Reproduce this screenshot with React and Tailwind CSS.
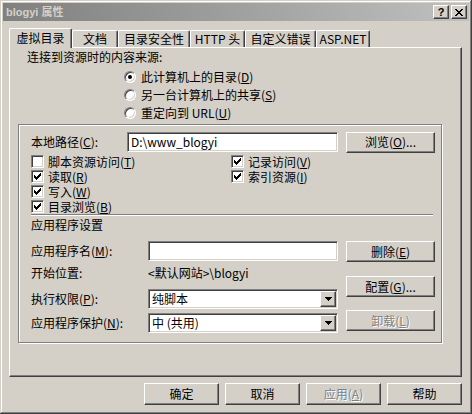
const sunken =
  'border border-t-[#808080] border-l-[#808080] border-r-white border-b-white shadow-[inset_1px_1px_0_#404040,inset_-1px_-1px_0_#d4d0c8]';
const raised =
  'border border-t-white border-l-white border-r-[#404040] border-b-[#404040] shadow-[inset_-1px_-1px_0_#808080]';

const Key = ({ k }) => (
  <>
    (<u>{k}</u>)
  </>
);

const Check = ({ checked }) => (
  <span className={`w-[13px] h-[13px] shrink-0 bg-white flex items-center justify-center ${sunken}`}>
    {checked && (
      <svg width="7" height="7" viewBox="0 0 7 7" shapeRendering="crispEdges">
        <path d="M0 2h1v3H0zM1 3h1v3H1zM2 4h1v3H2zM3 3h1v3H3zM4 2h1v3H4zM5 1h1v3H5zM6 0h1v3H6z" fill="#000" />
      </svg>
    )}
  </span>
);

const Radio = ({ checked, children }) => (
  <div className="h-[18px] flex items-center">
    <span className="w-[12px] h-[12px] rounded-full bg-white flex items-center justify-center border border-t-[#808080] border-l-[#808080] border-r-white border-b-white shadow-[inset_1px_1px_0_#404040,inset_-1px_-1px_0_#d4d0c8]">
      {checked && <span className="w-[4px] h-[4px] rounded-full bg-black" />}
    </span>
    <span className="ml-[5px] leading-[14px]">{children}</span>
  </div>
);

const Button = ({ children, disabled, className }) => (
  <div
    className={`bg-[#d4d0c8] flex items-center justify-center leading-[14px] ${raised} ${className} ${
      disabled ? 'text-[#808080] [text-shadow:1px_1px_0_#fff]' : 'text-black'
    }`}
  >
    {children}
  </div>
);

const Arrow = () => (
  <span className={`w-[16px] h-[16px] mr-px shrink-0 bg-[#d4d0c8] flex items-center justify-center ${raised}`}>
    <svg width="7" height="4" viewBox="0 0 7 4" shapeRendering="crispEdges">
      <path d="M0 0h7v1H0zM1 1h5v1H1zM2 2h3v1H2zM3 3h1v1H3z" fill="#000" />
    </svg>
  </span>
);

const Select = ({ value }) => (
  <div className={`w-[190px] h-[20px] bg-white flex items-center pl-[3px] ${sunken}`}>
    <span className="flex-1 leading-[14px]">{value}</span>
    <Arrow />
  </div>
);

const CheckRow = ({ checked, children }) => (
  <div className="h-[15px] flex items-center">
    <Check checked={checked} />
    <span className="ml-[4px] leading-[14px]">{children}</span>
  </div>
);

const tabs = [
  { label: '文档', w: 'w-[46px]' },
  { label: '目录安全性', w: 'w-[72px]' },
  { label: 'HTTP 头', w: 'w-[55px]' },
  { label: '自定义错误', w: 'w-[71px]' },
  { label: 'ASP.NET', w: 'w-[54px]' },
];

export default function App() {
  return (
    <div className="w-[472px] h-[414px] p-[3px] bg-[#d4d0c8] text-[12px] text-black font-['Noto_Sans_CJK_SC','Liberation_Sans',sans-serif] shadow-[inset_-1px_-1px_0_#404040,inset_1px_1px_0_#d4d0c8,inset_-2px_-2px_0_#808080,inset_2px_2px_0_#ffffff] overflow-hidden select-none">
      {/* title bar */}
      <div className="h-[18px] flex items-center pl-[3px] pr-[2px] bg-gradient-to-r from-[#808080] to-[#c0c0c0]">
        <span className="flex-1 text-[11px] font-bold text-[#d4d0c8] leading-[14px] font-['Liberation_Sans','Noto_Sans_CJK_SC',sans-serif]">
          blogyi 属性
        </span>
        <Button className="w-[16px] h-[14px] text-[11px] font-bold font-['Liberation_Sans',sans-serif]">?</Button>
        <Button className="w-[16px] h-[14px] ml-[2px]">
          <svg width="8" height="7" viewBox="0 0 8 7" shapeRendering="crispEdges">
            <path
              d="M0 0h2v1H0zM6 0h2v1H6zM1 1h2v1H1zM5 1h2v1H5zM2 2h4v1H2zM3 3h2v1H3zM2 4h4v1H2zM1 5h2v1H1zM5 5h2v1H5zM0 6h2v1H0zM6 6h2v1H6z"
              fill="#000"
            />
          </svg>
        </Button>
      </div>

      {/* tabs */}
      <div className="ml-[6px] mt-[7px] h-[19px] flex items-end">
        <div className="relative z-10 w-[63px] h-[20px] -mb-px pt-[2px] flex justify-center bg-[#d4d0c8] border-t border-l border-white border-r border-r-[#404040] rounded-t-[2px] shadow-[inset_-1px_0_0_#808080]">
          <span className="leading-[14px]">虚拟目录</span>
        </div>
        {tabs.map((t) => (
          <div
            key={t.label}
            className={`${t.w} h-[17px] pt-px flex justify-center border-t border-l border-white border-r border-r-[#404040] rounded-t-[2px] shadow-[inset_-1px_0_0_#808080]`}
          >
            <span className="leading-[14px]">{t.label}</span>
          </div>
        ))}
      </div>

      {/* tab panel */}
      <div className="ml-[6px] w-[453px] h-[330px] border border-t-white border-l-white border-r-[#404040] border-b-[#404040] shadow-[inset_-1px_-1px_0_#808080]">
        <div className="ml-[17px] mt-[2px] leading-[14px]">连接到资源时的内容来源:</div>
        <div className="ml-[114px] mt-[4px] flex flex-col">
          <Radio checked>
            此计算机上的目录<Key k="D" />
          </Radio>
          <Radio>
            另一台计算机上的共享<Key k="S" />
          </Radio>
          <Radio>
            重定向到 URL<Key k="U" />
          </Radio>
        </div>

        {/* group box */}
        <div className="ml-[8px] mt-[2px] w-[424px] h-[219px] pl-[12px] pt-[7px] border border-[#808080] shadow-[1px_1px_0_#fff,inset_1px_1px_0_#fff]">
          <div className="h-[20px] flex items-center">
            <span className="w-[96px] leading-[14px]">
              本地路径<Key k="C" />:
            </span>
            <div className={`w-[211px] h-[20px] bg-white flex items-center pl-[3px] ${sunken}`}>
              <span className="leading-[14px]">D:\www_blogyi</span>
            </div>
            <Button className="ml-[8px] w-[89px] h-[21px]">
              浏览<Key k="O" />...
            </Button>
          </div>

          <div className="mt-[2px] flex">
            <div className="w-[200px] flex flex-col">
              <CheckRow>
                脚本资源访问<Key k="T" />
              </CheckRow>
              <CheckRow checked>
                读取<Key k="R" />
              </CheckRow>
              <CheckRow checked>
                写入<Key k="W" />
              </CheckRow>
              <CheckRow checked>
                目录浏览<Key k="B" />
              </CheckRow>
            </div>
            <div className="flex flex-col">
              <CheckRow checked>
                记录访问<Key k="V" />
              </CheckRow>
              <CheckRow checked>
                索引资源<Key k="I" />
              </CheckRow>
            </div>
          </div>

          <div className="w-[402px] h-px bg-[#808080] shadow-[0_1px_0_#fff]" />

          <div className="mt-[3px] leading-[14px]">应用程序设置</div>

          <div className="mt-[9px] flex">
            <div className="w-[307px] flex flex-col">
              <div className="h-[20px] flex items-center">
                <span className="w-[117px] leading-[14px]">
                  应用程序名<Key k="M" />:
                </span>
                <div className={`w-[190px] h-[20px] bg-white ${sunken}`} />
              </div>
              <div className="mt-[5px] h-[14px] flex items-center">
                <span className="w-[117px] leading-[14px]">开始位置:</span>
                <span className="leading-[14px]">&lt;默认网站&gt;\blogyi</span>
              </div>
              <div className="mt-[9px] h-[20px] flex items-center">
                <span className="w-[117px] leading-[14px]">
                  执行权限<Key k="P" />:
                </span>
                <Select value="纯脚本" />
              </div>
              <div className="mt-[4px] h-[20px] flex items-center">
                <span className="w-[117px] leading-[14px]">
                  应用程序保护<Key k="N" />:
                </span>
                <Select value="中 (共用)" />
              </div>
            </div>
            <div className="ml-[8px] flex flex-col">
              <Button className="w-[89px] h-[21px]">
                删除<Key k="E" />
              </Button>
              <Button className="mt-[14px] w-[89px] h-[21px]">
                配置<Key k="G" />...
              </Button>
              <Button disabled className="mt-[13px] w-[89px] h-[21px]">
                卸载<Key k="L" />
              </Button>
            </div>
          </div>
        </div>
      </div>

      {/* dialog buttons */}
      <div className="ml-[6px] mt-[6px] w-[453px] flex justify-end gap-[6px]">
        <Button className="w-[75px] h-[22px]">确定</Button>
        <Button className="w-[75px] h-[22px]">取消</Button>
        <Button disabled className="w-[75px] h-[22px]">
          应用<Key k="A" />
        </Button>
        <Button className="w-[75px] h-[22px]">帮助</Button>
      </div>
    </div>
  );
}
